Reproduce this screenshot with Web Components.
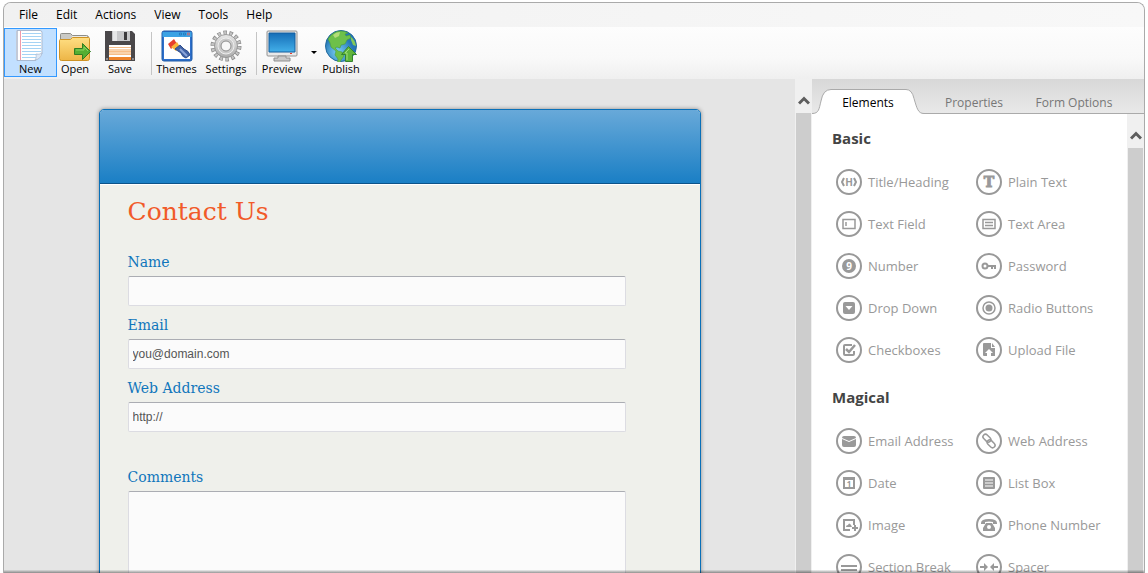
<!DOCTYPE html>
<html lang="en">
<head>
<meta charset="utf-8">
<meta name="viewport" content="width=device-width, initial-scale=1">
<title>Form Builder</title>
<style>
    html, body { height: 100%; }
    body {
        margin: 0;
        overflow: hidden;
        background: #fff;
        font-family: "Open Sans", "Noto Sans", sans-serif;
        font-size: 12px;
        color: #000;
    }
</style>
</head>
<body>
<app-window>
    <menu-bar slot="menu" items="File,Edit,Actions,View,Tools,Help"></menu-bar>
    <tool-bar slot="toolbar">
        <tool-button icon="new" active style="--tool-width: 53px">New</tool-button>
        <tool-button icon="open" style="--tool-width: 36px">Open</tool-button>
        <tool-button icon="save" style="--tool-width: 54px">Save</tool-button>
        <tool-separator style="--tool-width: 8px"></tool-separator>
        <tool-button icon="themes" style="--tool-width: 43px">Themes</tool-button>
        <tool-button icon="settings" style="--tool-width: 56px">Settings</tool-button>
        <tool-separator style="--tool-width: 5px"></tool-separator>
        <tool-button icon="preview" style="--tool-width: 46px">Preview</tool-button>
        <tool-caret></tool-caret>
        <tool-button icon="publish" style="--tool-width: 36px">Publish</tool-button>
    </tool-bar>
    <form-canvas>
        <form-card heading="Contact Us">
            <form-field label="Name"></form-field>
            <form-field label="Email" value="you@domain.com"></form-field>
            <form-field label="Web Address" value="http://"></form-field>
            <form-field label="Comments" multiline></form-field>
        </form-card>
    </form-canvas>
    <scroll-strip></scroll-strip>
    <side-panel>
        <palette-group heading="Basic">
            <palette-item icon="heading">Title/Heading</palette-item>
            <palette-item icon="text">Plain Text</palette-item>
            <palette-item icon="field">Text Field</palette-item>
            <palette-item icon="area">Text Area</palette-item>
            <palette-item icon="number">Number</palette-item>
            <palette-item icon="password">Password</palette-item>
            <palette-item icon="dropdown">Drop Down</palette-item>
            <palette-item icon="radio">Radio Buttons</palette-item>
            <palette-item icon="check">Checkboxes</palette-item>
            <palette-item icon="upload">Upload File</palette-item>
        </palette-group>
        <palette-group heading="Magical">
            <palette-item icon="email">Email Address</palette-item>
            <palette-item icon="link">Web Address</palette-item>
            <palette-item icon="date">Date</palette-item>
            <palette-item icon="list">List Box</palette-item>
            <palette-item icon="image">Image</palette-item>
            <palette-item icon="phone">Phone Number</palette-item>
            <palette-item icon="section">Section Break</palette-item>
            <palette-item icon="spacer">Spacer</palette-item>
        </palette-group>
    </side-panel>
</app-window>

<script>
    // 32x32 toolbar icons
    const toolIcons = {
        new: `
            <path d="M2 .5h23q2 0 2 2v21l-6 7H2z" fill="#fff" stroke="#a9b9d0"/>
            <path d="M1 1h2v29H1z" fill="#c2cad8"/>
            <path d="M7 3.500h19M7 6.500h19M7 9.500h19M7 12.500h19M7 15.500h19M7 18.500h19M7 21.500h19M7 24.500h16M7 27.500h14" stroke="#a5d3f4"/>
            <path d="M5.500 1v29" stroke="#ef9aa9"/>
            <path d="M20 30q2-2 1-6 3 1 6-1-1 6-7 7z" fill="#dce8f6" stroke="#a9b9d0" stroke-width=".7"/>`,
        open: `
            <path d="M1.500 29V4.500q0-1 1-1h9l2 2h14q2 0 2 2V29z" fill="#c9c9c5" stroke="#8d8d88"/>
            <path d="M13 7h15" stroke="#f4f4f0" stroke-width="1.500"/>
            <path d="M.5 10.500q0-1 1-1h10l2-2h16q1 0 1 1v20q0 2-2 2H2.500q-2 0-2-2z" fill="url(#folder)" stroke="#cf9324"/>
            <path d="M15.500 18.500h8v-5l8 8-8 8v-5h-8z" fill="#54ae32" stroke="#2f7d22"/>
            <path d="M17 20h8v-3l4 4" fill="none" stroke="#8bd55f"/>`,
        save: `
            <path d="M1 1h27l3 3v27H1z" fill="#4a484a"/>
            <path d="M8 1h18v10H8z" fill="#c8c9cb"/>
            <path d="M9 1h4v10H9z" fill="#e6e7e8"/>
            <path d="M20 2h3v8h-3z" fill="#3c3b3d"/>
            <path d="M5 15h22v15H5z" fill="#fff"/>
            <path d="M5 19h22v2H5zM5 22h22v2H5z" fill="#f9d3ad"/>
            <path d="M5 17.500h22M5 21.500h22M5 24.500h22" stroke="#f7bd87"/>
            <path d="M5 27h22v3H5z" fill="#ef842b"/>
            <path d="M2 28h2v2H2zM28 28h2v2h-2z" fill="#8d8b8d"/>`,
        themes: `
            <rect x="1" y="1" width="30" height="30" rx="2" fill="#2d6fcc" stroke="#1f5ca8"/>
            <path d="M1.500 2h29v5h-29z" fill="#3ba2e4"/>
            <path d="M18.500 3h2v2h-2zM22.500 3h2v2h-2z" fill="none" stroke="#2377ba" stroke-width=".8"/>
            <path d="M26.500 3h2v2h-2z" fill="none" stroke="#da6665" stroke-width=".8"/>
            <path d="M3 7h26v22H3z" fill="#fff"/>
            <path d="M7 14l6-5 3 5-6 5z" fill="#e6402d"/>
            <path d="M10 17l6-5 3 5-4 4z" fill="#f8b43b"/>
            <path d="M14 19l5-4 4 4q5 2 6 6l-4 3q-4-1-5-5z" fill="#4162a6" stroke="#31508d"/>
            <path d="M19 19l7 7" stroke="#8ca6da" stroke-width="2"/>`,
        settings: `
            <circle cx="16" cy="16" r="13" fill="none" stroke="#8d8d8d" stroke-width="5" stroke-dasharray="3.400 2.434"/>
            <circle cx="16" cy="16" r="13" fill="none" stroke="#c4c4c4" stroke-width="3.600" stroke-dasharray="2 3.834" stroke-dashoffset="-.7"/>
            <circle cx="16" cy="16" r="11.500" fill="url(#metal)" stroke="#8d8d8d" stroke-width=".8"/>
            <circle cx="16" cy="16" r="8" fill="#c9c9c9" stroke="#eee"/>
            <circle cx="16" cy="16" r="5" fill="#f7f7f7" stroke="#8d8d8d"/>`,
        preview: `
            <rect x="1" y="1" width="30" height="25" rx="1" fill="#e9e9e9" stroke="#929292"/>
            <path d="M3 3h26v19H3z" fill="url(#screen)" stroke="#155f9e"/>
            <path d="M12 26h8v2h4v3H8v-3h4z" fill="#c9c9c9" stroke="#909090"/>
            <path d="M24 23h2v1h-2z" fill="#e33c2e"/>`,
        publish: `
            <circle cx="16" cy="16" r="15.500" fill="url(#globe)" stroke="#246a9d"/>
            <path d="M3 9q5-8 13-8 4 0 7 2l-3 1 1 2 4-1 1 3-4 2-2 4-4 1-1 3-3-1-2 1 3 3 4 1 2 4-3 4-2 4q-2-1-1-5l-3-4 1-4-5-4-1-4z" fill="#6dc04a" stroke="#4a9d3b" stroke-width=".6"/>
            <path d="M26 7q4 3 5 9l-3-1-2-5z" fill="#83c95a"/>
            <path d="M8 5q3-3 7-3l-1 4-4 2z" fill="#b4dd79"/>
            <path d="M20.500 31.500v-7h-4l7-8 8 8h-4v7z" fill="#5fb53c" stroke="#348330"/>
            <path d="M22 30v-7h-2l4-4" fill="none" stroke="#a1de77"/>`
    };

    // glyphs drawn inside the 26x26 ring of a palette item
    const ring = '<circle cx="13" cy="13" r="12" fill="none" stroke="#999" stroke-width="2"/>';
    const paletteIcons = {
        heading: '<path d="M8 9L6 13l2 4M18 9l2 4-2 4" fill="none" stroke="#999" stroke-width="2"/><text x="13" y="17" font-size="10">H</text>',
        text: '<text x="13" y="18" font-size="14" font-family="DejaVu Serif, serif" stroke="#999">T</text>',
        field: '<path d="M7 8.500h12v9H7zM10 11v4" fill="none" stroke="#999" stroke-width="1.500"/>',
        area: '<path d="M7 8.500h12v9H7zM9 11.500h8M9 14.500h8" fill="none" stroke="#999" stroke-width="1.500"/>',
        number: '<circle cx="13" cy="13" r="7"/><text x="13" y="17" font-size="10" style="fill:#fff">9</text>',
        password: '<circle cx="9" cy="13" r="2.500" fill="none" stroke="#999" stroke-width="2"/><path d="M11 12h9v4h-2v-2h-1v2h-2v-2h-4z"/>',
        dropdown: '<rect x="7" y="7" width="12" height="12" rx="2"/><path d="M9.500 11h7L13 15z" fill="#fff"/>',
        radio: '<circle cx="13" cy="13" r="6" fill="none" stroke="#999" stroke-width="1.500"/><circle cx="13" cy="13" r="3.500"/>',
        check: '<path d="M16 8H9q-1 0-1 1v8q0 1 1 1h8q1 0 1-1v-3" fill="none" stroke="#999" stroke-width="2"/><path d="M10 12l3 3 6-7" fill="none" stroke="#999" stroke-width="2.500"/>',
        upload: '<path d="M8 6h7v5h4v8H8q-1 0-1-1V7q0-1 1-1zM16 6l3 4h-3z"/><path d="M13 12l4 4h-2v3h-4v-3H9z" fill="#fff"/>',
        email: '<path d="M8 8h10q2 0 2 2l-7 3-7-3q0-2 2-2z"/><path d="M6 11l7 3 7-3v6q0 2-2 2H8q-2 0-2-2z"/>',
        link: '<g fill="none" stroke="#999" stroke-width="1.500" transform="rotate(45 13 13)"><rect x="5" y="10" width="9" height="5" rx="2.500"/><rect x="12" y="11" width="9" height="5" rx="2.500"/></g>',
        date: '<path d="M8 9h10v9H8z" fill="none" stroke="#999" stroke-width="2"/><path d="M7 7h12v3H7z"/><text x="13" y="17" font-size="8">1</text>',
        list: '<rect x="7" y="7" width="12" height="12" rx="1"/><path d="M9 10h8M9 13h8M9 16h8" stroke="#fff"/>',
        image: '<path d="M14 18H8V8h10v5" fill="none" stroke="#999" stroke-width="2"/><path d="M10 15q0-2 2-2 1-3 3 0l1 2zM16 15h2v-2h2v2h2v2h-2v2h-2v-2h-2z"/>',
        phone: '<path d="M5 11q0-4 8-4t8 4v1h-4v-2q-4-1-8 0v2H5zM10 11h6l3 5v3H7v-3z"/><circle cx="13" cy="15" r="2" fill="#fff"/>',
        section: '<path d="M5 12h16M5 16h16" stroke="#999" stroke-width="2"/>',
        spacer: '<path d="M4 12h4V9l4 4-4 4v-3H4zM22 12h-4V9l-4 4 4 4v-3h4z"/>'
    };

    const chevron = '<svg width="12" height="9" viewBox="0 0 12 9" aria-hidden="true"><path d="M1 7.500L6 2.500l5 5" fill="none" stroke="#5e5e5e" stroke-width="3"/></svg>';

    class AppWindow extends HTMLElement {
        connectedCallback() {
            this.attachShadow({ mode: 'open' });
            this.shadowRoot.innerHTML = `
                <style>
                    :host { display: block; height: 100%; box-sizing: border-box; padding: 2px 3px 0; }
                    .frame {
                        position: relative;
                        display: flex;
                        flex-direction: column;
                        height: 100%;
                        box-sizing: border-box;
                        border: 1px solid #aaa;
                        border-bottom: 0;
                        border-radius: 8px 8px 0 0;
                        overflow: hidden;
                        background: #f5f5f5;
                    }
                    main { flex: 1; min-height: 0; display: flex; }
                    .shade {
                        position: absolute;
                        inset: auto 0 0;
                        height: 3px;
                        background: linear-gradient(rgba(0, 0, 0, 0.05), rgba(0, 0, 0, 0.4));
                    }
                </style>
                <div class="frame">
                    <slot name="menu"></slot>
                    <slot name="toolbar"></slot>
                    <main><slot></slot></main>
                    <div class="shade"></div>
                </div>
            `;
        }
    }

    class MenuBar extends HTMLElement {
        connectedCallback() {
            const items = this.getAttribute('items').split(',');
            this.attachShadow({ mode: 'open' });
            this.shadowRoot.innerHTML = `
                <style>
                    :host { display: block; background: linear-gradient(90deg, #f1f1f1, #f8f8f8); }
                    nav { display: flex; gap: 18px; padding: 0 15px; }
                    button {
                        padding: 0;
                        border: 0;
                        background: none;
                        font: inherit;
                        line-height: 24px;
                        color: #000;
                    }
                </style>
                <nav>${items.map((item) => `<button type="button">${item}</button>`).join('')}</nav>
            `;
        }
    }

    class ToolBar extends HTMLElement {
        connectedCallback() {
            this.attachShadow({ mode: 'open' });
            this.shadowRoot.innerHTML = `
                <style>
                    :host {
                        display: flex;
                        height: 52px;
                        padding-top: 1px;
                        box-sizing: border-box;
                        background: linear-gradient(#fdfdfd, #f9f9f9 60%, #efefef);
                    }
                </style>
                <slot></slot>
            `;
        }
    }

    class ToolButton extends HTMLElement {
        connectedCallback() {
            this.attachShadow({ mode: 'open' });
            this.shadowRoot.innerHTML = `
                <style>
                    :host { display: block; width: var(--tool-width); height: 49px; }
                    button {
                        display: flex;
                        flex-direction: column;
                        align-items: center;
                        width: 100%;
                        height: 100%;
                        padding: 1px 0 0;
                        border: 1px solid transparent;
                        background: none;
                        font: inherit;
                        font-size: 11px;
                        line-height: 14px;
                        white-space: nowrap;
                        color: #000;
                    }
                    :host([active]) button { border-color: #39f; background: #c2e0ff; }
                    svg { flex: none; }
                </style>
                <button type="button">
                    <svg width="32" height="32" viewBox="0 0 32 32" aria-hidden="true">
                        <defs>
                            <linearGradient id="folder" x2="0" y2="1"><stop stop-color="#ffdf84"/><stop offset="1" stop-color="#edb546"/></linearGradient>
                            <linearGradient id="metal" x2="0" y2="1"><stop stop-color="#e8e8e8"/><stop offset="1" stop-color="#adadad"/></linearGradient>
                            <linearGradient id="screen" x2="0" y2="1"><stop stop-color="#156db7"/><stop offset="1" stop-color="#43b0e9"/></linearGradient>
                            <radialGradient id="globe" cx=".4" cy=".7"><stop stop-color="#7ed1f5"/><stop offset="1" stop-color="#2477b7"/></radialGradient>
                        </defs>
                        ${toolIcons[this.getAttribute('icon')]}
                    </svg>
                    <slot></slot>
                </button>
            `;
        }
    }

    class ToolSeparator extends HTMLElement {
        connectedCallback() {
            this.attachShadow({ mode: 'open' });
            this.shadowRoot.innerHTML = `
                <style>
                    :host { display: flex; justify-content: center; width: var(--tool-width); padding: 4px 0; }
                    i { width: 1px; background: #c5c5c5; }
                </style>
                <i></i>
            `;
        }
    }

    class ToolCaret extends HTMLElement {
        connectedCallback() {
            this.attachShadow({ mode: 'open' });
            this.shadowRoot.innerHTML = `
                <style>
                    :host { display: flex; width: 18px; height: 48px; }
                    button { display: flex; align-items: center; justify-content: center; width: 100%; padding: 0; border: 0; background: none; }
                </style>
                <button type="button" aria-label="Preview options">
                    <svg width="6" height="3" viewBox="0 0 6 3" aria-hidden="true"><path d="M0 0h6L3 3z"/></svg>
                </button>
            `;
        }
    }

    class FormCanvas extends HTMLElement {
        connectedCallback() {
            this.attachShadow({ mode: 'open' });
            this.shadowRoot.innerHTML = `
                <style>
                    :host {
                        display: block;
                        flex: 1;
                        min-width: 0;
                        padding: 30px 20px 0;
                        overflow: hidden;
                        background: #e5e5e5;
                    }
                </style>
                <slot></slot>
            `;
        }
    }

    class FormCard extends HTMLElement {
        connectedCallback() {
            this.attachShadow({ mode: 'open' });
            this.shadowRoot.innerHTML = `
                <style>
                    :host {
                        display: block;
                        max-width: 600px;
                        margin: 0 auto;
                        border: 1px solid #0a70b8;
                        border-radius: 5px 5px 0 0;
                        background: #eff0eb;
                        box-shadow: 0 0 4px rgba(0, 0, 0, 0.4);
                        font-family: "DejaVu Serif", serif;
                        overflow: hidden;
                    }
                    .banner {
                        height: 73px;
                        border-bottom: 1px solid #0c5389;
                        background: linear-gradient(#68a9d9, #1a7fc5);
                    }
                    form {
                        display: flex;
                        flex-direction: column;
                        gap: 9px;
                        padding: 10px 74px 20px 28px;
                        border-top: 1px solid #fff;
                    }
                    h1 {
                        margin: 0 0 14px;
                        font-size: 25px;
                        line-height: 34px;
                        font-weight: 400;
                        color: #f15a29;
                    }
                </style>
                <div class="banner"></div>
                <form>
                    <h1>${this.getAttribute('heading')}</h1>
                    <slot></slot>
                </form>
            `;
        }
    }

    class FormField extends HTMLElement {
        connectedCallback() {
            const value = this.getAttribute('value') || '';
            const control = this.hasAttribute('multiline')
                ? '<textarea id="control"></textarea>'
                : `<input id="control" type="text" value="${value}">`;
            this.attachShadow({ mode: 'open' });
            this.shadowRoot.innerHTML = `
                <style>
                    :host { display: flex; flex-direction: column; gap: 4px; }
                    :host([multiline]) { margin-top: 26px; }
                    label { font-size: 14px; line-height: 20px; color: #1076bc; }
                    input, textarea {
                        width: 100%;
                        box-sizing: border-box;
                        height: 30px;
                        padding: 0 4px;
                        border: 1px solid #dcdce2;
                        border-top-color: #abadb3;
                        border-radius: 2px;
                        outline: 0;
                        background: #fbfbfb;
                        font: 12px "Liberation Sans", sans-serif;
                        color: #555;
                    }
                    textarea { height: 120px; resize: none; }
                </style>
                <label for="control">${this.getAttribute('label')}</label>
                ${control}
            `;
        }
    }

    class ScrollStrip extends HTMLElement {
        connectedCallback() {
            this.attachShadow({ mode: 'open' });
            this.shadowRoot.innerHTML = `
                <style>
                    :host { display: flex; flex-direction: column; flex: none; width: 17px; background: #f0f0f0; }
                    button {
                        display: flex;
                        align-items: end;
                        justify-content: center;
                        height: 34px;
                        padding: 0 0 8px;
                        border: 0;
                        background: none;
                    }
                    i { flex: 1; margin: 0 1px; background: #cdcdcd; }
                </style>
                <button type="button" aria-label="Scroll up">${chevron}</button>
                <i></i>
            `;
        }
    }

    class SidePanel extends HTMLElement {
        connectedCallback() {
            this.attachShadow({ mode: 'open' });
            this.shadowRoot.innerHTML = `
                <style>
                    :host { display: flex; flex-direction: column; flex: none; width: 332px; background: #fff; }
                    .tabs {
                        display: grid;
                        grid-template-columns: 112px 100px 100px;
                        padding-top: 10px;
                        background: linear-gradient(#d8d8d8, #e9e9e9);
                        box-shadow: inset 0 -1px #aaa;
                    }
                    .tabs button {
                        position: relative;
                        height: 25px;
                        padding: 2px 0 0;
                        border: 0;
                        background: none;
                        font: inherit;
                        color: #777;
                    }
                    .tabs .active { color: #000; }
                    .tabs svg { position: absolute; inset: 0; }
                    .tabs span { position: relative; }
                    .body { flex: 1; min-height: 0; display: flex; }
                    .list {
                        flex: 1;
                        display: flex;
                        flex-direction: column;
                        gap: 14px;
                        padding: 12px 15px 0 20px;
                        overflow: hidden;
                    }
                </style>
                <div class="tabs" role="tablist">
                    <button type="button" role="tab" aria-selected="true" class="active">
                        <svg width="112" height="25" viewBox="0 0 112 25" aria-hidden="true">
                            <path d="M0 24.500C7 24.500 7 20 9 12Q11 .5 19 .5h75q6 0 8 9c3 10 4 15 10 15V25H0z" fill="#fff"/>
                            <path d="M0 24.500C7 24.500 7 20 9 12Q11 .5 19 .5h75q6 0 8 9c3 10 4 15 10 15" fill="none" stroke="#aaa"/>
                        </svg>
                        <span>Elements</span>
                    </button>
                    <button type="button" role="tab" aria-selected="false"><span>Properties</span></button>
                    <button type="button" role="tab" aria-selected="false"><span>Form Options</span></button>
                </div>
                <div class="body">
                    <div class="list"><slot></slot></div>
                    <scroll-strip></scroll-strip>
                </div>
            `;
        }
    }

    class PaletteGroup extends HTMLElement {
        connectedCallback() {
            this.attachShadow({ mode: 'open' });
            this.shadowRoot.innerHTML = `
                <style>
                    :host { display: block; }
                    h2 { margin: 0 0 11px; font-size: 15px; line-height: 24px; font-weight: 700; color: #444; }
                    .items { display: grid; grid-template-columns: 140px 1fr; padding-left: 4px; }
                </style>
                <h2>${this.getAttribute('heading')}</h2>
                <div class="items"><slot></slot></div>
            `;
        }
    }

    class PaletteItem extends HTMLElement {
        connectedCallback() {
            this.attachShadow({ mode: 'open' });
            this.shadowRoot.innerHTML = `
                <style>
                    :host { display: block; }
                    button {
                        display: flex;
                        align-items: center;
                        gap: 6px;
                        height: 42px;
                        padding: 0;
                        border: 0;
                        background: none;
                        font: inherit;
                        font-size: 13px;
                        white-space: nowrap;
                        color: #999;
                    }
                    svg { flex: none; fill: #999; }
                    text { text-anchor: middle; font-weight: 700; fill: #999; }
                </style>
                <button type="button">
                    <svg width="26" height="26" viewBox="0 0 26 26" aria-hidden="true">${ring}${paletteIcons[this.getAttribute('icon')]}</svg>
                    <slot></slot>
                </button>
            `;
        }
    }

    customElements.define('app-window', AppWindow);
    customElements.define('menu-bar', MenuBar);
    customElements.define('tool-bar', ToolBar);
    customElements.define('tool-button', ToolButton);
    customElements.define('tool-separator', ToolSeparator);
    customElements.define('tool-caret', ToolCaret);
    customElements.define('form-canvas', FormCanvas);
    customElements.define('form-card', FormCard);
    customElements.define('form-field', FormField);
    customElements.define('scroll-strip', ScrollStrip);
    customElements.define('side-panel', SidePanel);
    customElements.define('palette-group', PaletteGroup);
    customElements.define('palette-item', PaletteItem);
</script>
</body>
</html>
